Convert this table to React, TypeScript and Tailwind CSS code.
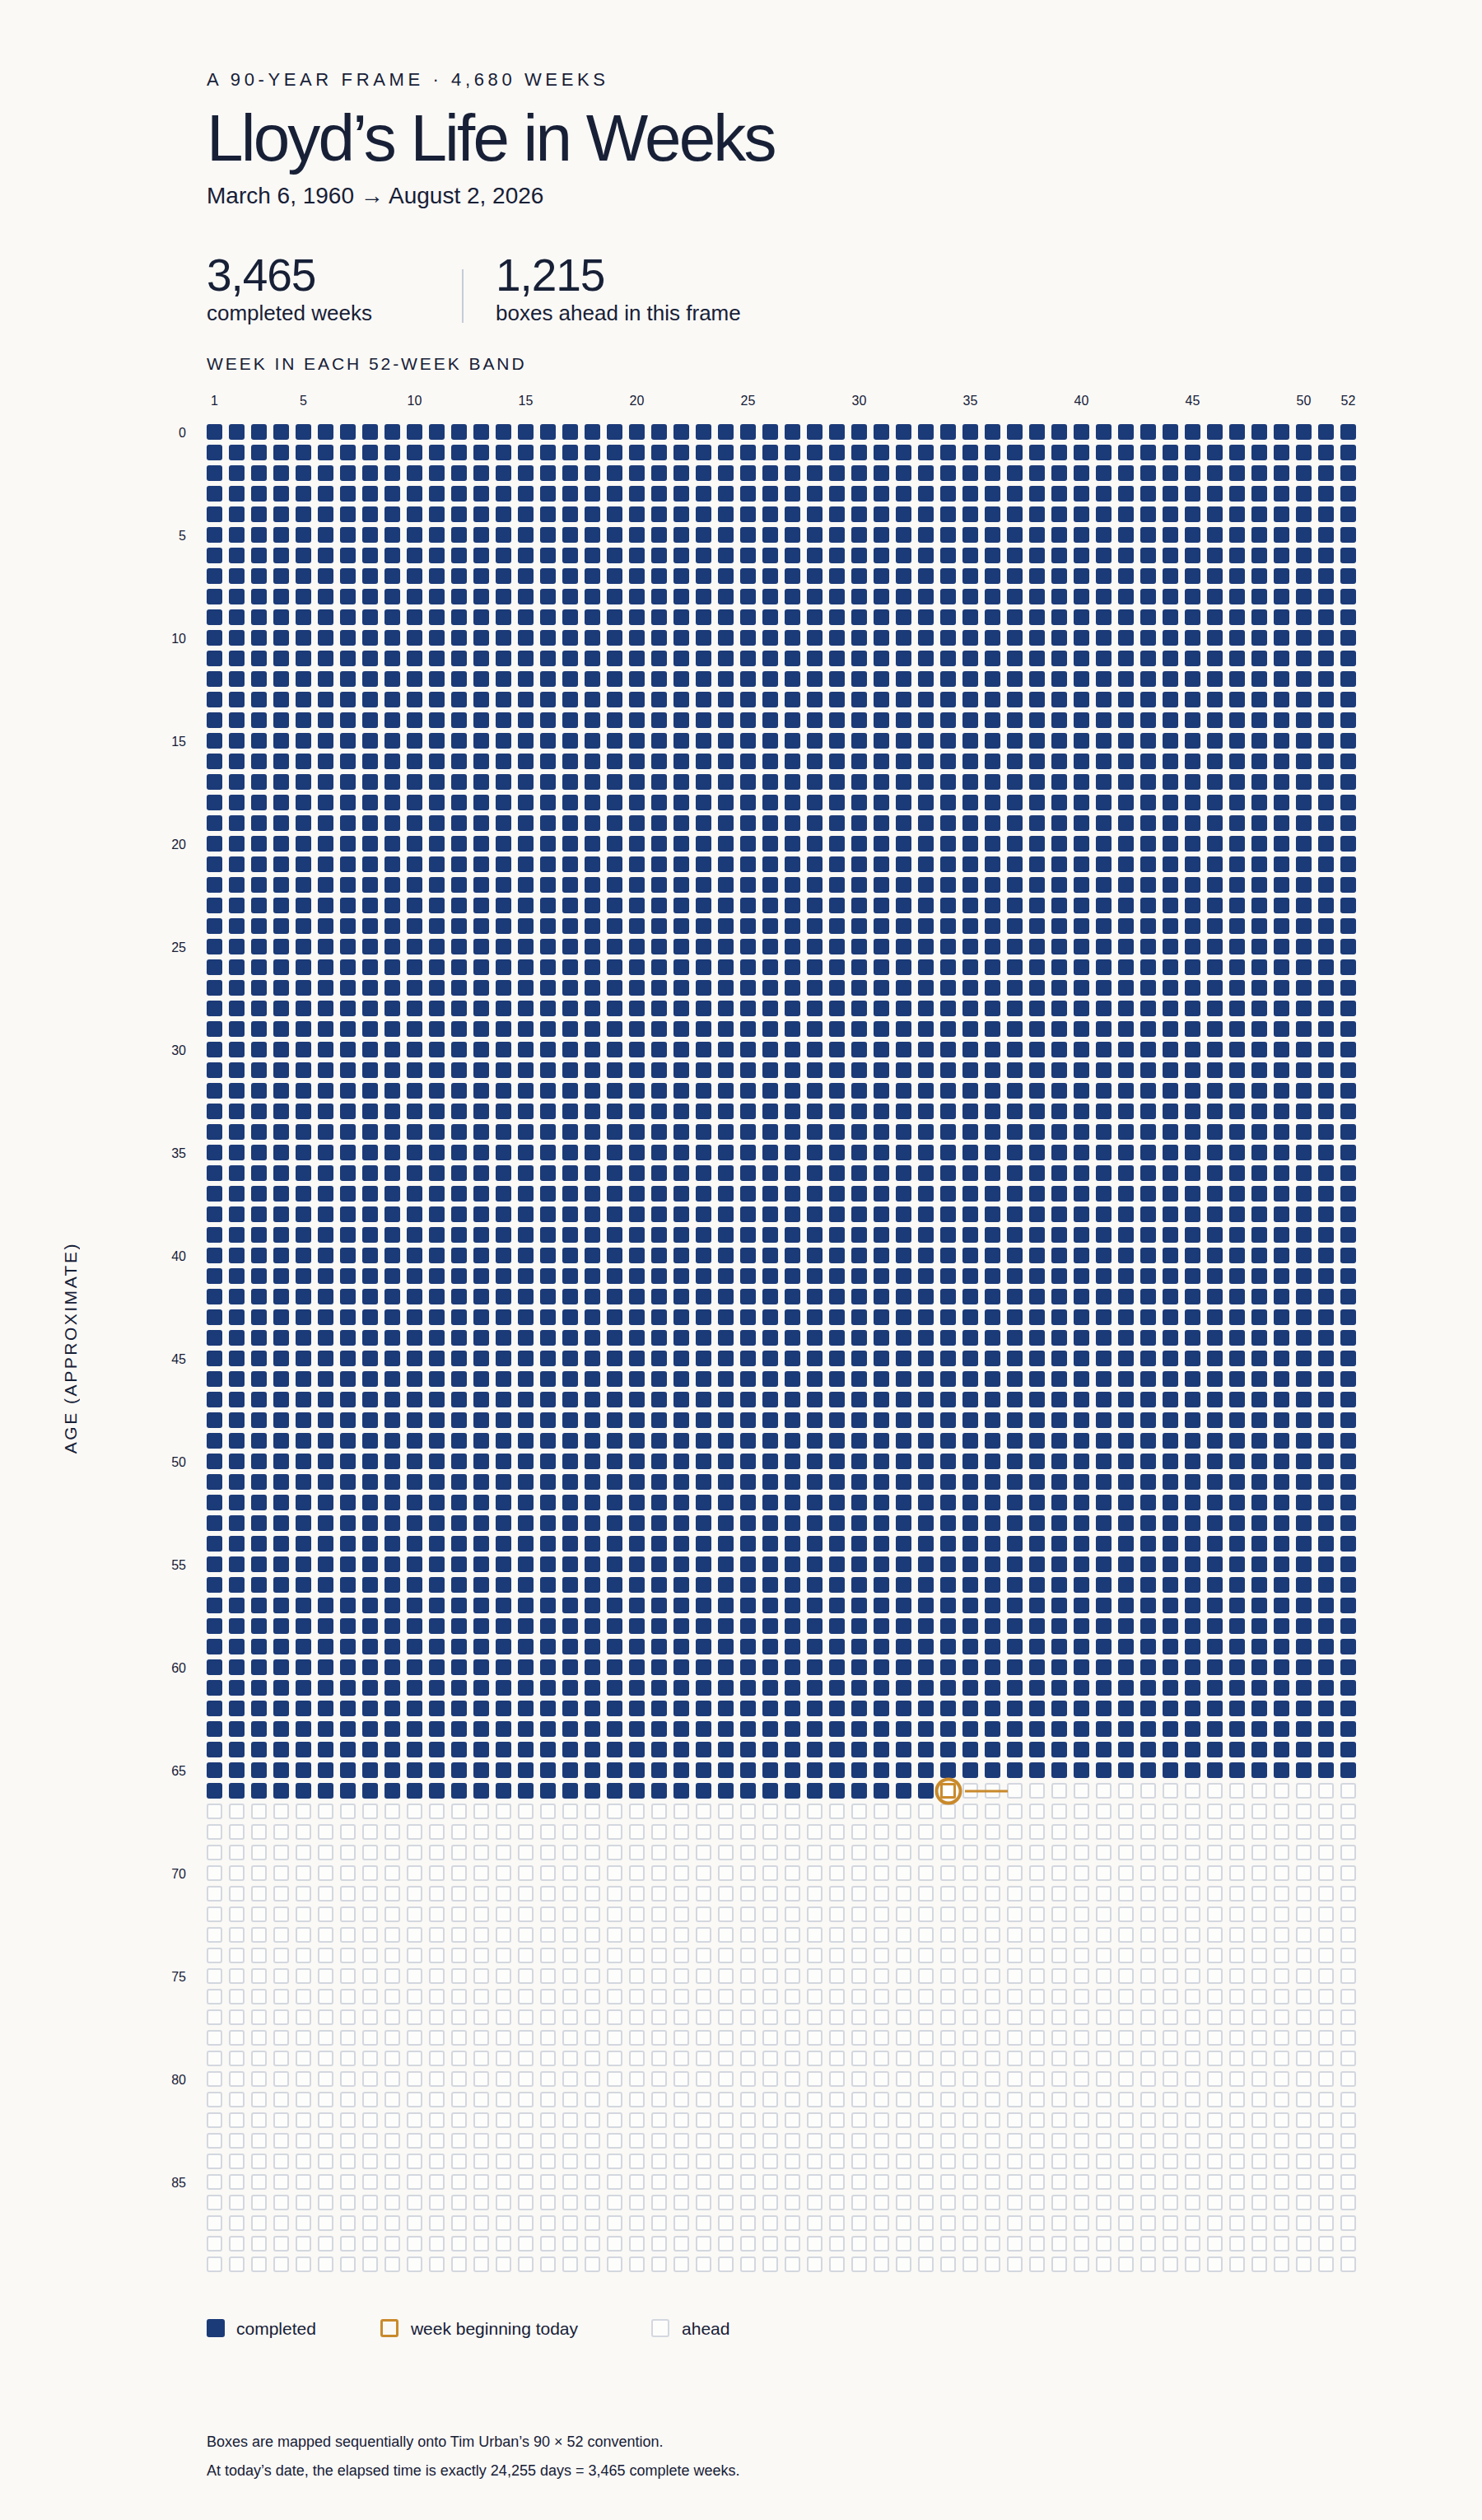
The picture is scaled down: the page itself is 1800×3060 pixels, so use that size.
import React from 'react';

const TOTAL_ROWS = 90;
const WEEKS_PER_ROW = 52;
const COMPLETED = 3465;

const weekLabels = [1, 5, 10, 15, 20, 25, 30, 35, 40, 45, 50, 52];

const Cell: React.FC<{ index: number }> = ({ index }) => {
  if (index < COMPLETED) {
    return <div className="h-[19px] w-[19px] rounded-[3px] bg-[#1b3a78]" />;
  }
  if (index === COMPLETED) {
    // the week that begins today, with its ring and pointer line
    return (
      <div className="relative h-[19px] w-[19px] rounded-[2px] border-[3px] border-[#c98a2c] bg-white">
        <div className="absolute left-1/2 top-1/2 h-[33px] w-[33px] -translate-x-1/2 -translate-y-1/2 rounded-full border-4 border-[#c98a2c]" />
        <div className="absolute left-[27px] top-1/2 h-[3px] w-[52px] -translate-y-1/2 bg-[#c98a2c]" />
      </div>
    );
  }
  return <div className="h-[19px] w-[19px] rounded-[3px] border-2 border-[#d3d7df] bg-[#fdfdfc]" />;
};

const App: React.FC = () => {
  const cells = Array.from({ length: TOTAL_ROWS * WEEKS_PER_ROW }, (_, i) => i);
  const rows = Array.from({ length: TOTAL_ROWS }, (_, i) => i);
  const cols = Array.from({ length: WEEKS_PER_ROW }, (_, i) => i + 1);

  return (
    <div className="min-h-[3060px] bg-[#faf9f6] pl-[76px] pt-[86px] font-['Liberation_Sans',Arial,sans-serif] text-[#172036]">
      {/* Header */}
      <div className="ml-[175px]">
        <p className="text-[22px] uppercase leading-[22px] tracking-[0.21em]">A 90-Year Frame · 4,680 Weeks</p>
        <h1 className="mt-[20px] text-[80px] font-normal leading-[80px] tracking-[-0.035em]">Lloyd’s Life in Weeks</h1>
        <p className="mt-[16px] text-[28px] leading-[28px]">March 6, 1960 → August 2, 2026</p>

        {/* Stats */}
        <div className="mt-[55px] flex items-start">
          <div className="w-[310px]">
            <div className="text-[55px] leading-[55px] tracking-[-0.02em]">3,465</div>
            <div className="mt-[5px] text-[26px] leading-[26px]">completed weeks</div>
          </div>
          <div className="mt-[20px] h-[65px] w-[2px] bg-[#c5ccd8]" />
          <div className="ml-[39px]">
            <div className="text-[55px] leading-[55px] tracking-[-0.02em]">1,215</div>
            <div className="mt-[5px] text-[26px] leading-[26px]">boxes ahead in this frame</div>
          </div>
        </div>

        <p className="mt-[38px] text-[21px] uppercase leading-[21px] tracking-[0.14em]">Week in each 52-week band</p>

        {/* Week numbers */}
        <div className="mt-[27px] grid grid-cols-[repeat(52,19px)] gap-x-[8px] text-[16px] leading-[16px]">
          {cols.map((c) => (
            <div key={c} className="flex justify-center whitespace-nowrap">
              {weekLabels.includes(c) ? c : ''}
            </div>
          ))}
        </div>
      </div>

      {/* Chart */}
      <div className="mt-[20px] flex">
        <div className="flex w-[18px] items-center justify-center">
          <span className="rotate-180 whitespace-nowrap text-[21px] uppercase leading-[21px] tracking-[0.12em] [writing-mode:vertical-rl]">
            Age (approximate)
          </span>
        </div>
        <div className="mr-[25px] flex w-[132px] flex-col gap-y-[6px] text-[16px]">
          {rows.map((r) => (
            <div key={r} className="h-[19px] pt-[1px] text-right leading-[19px]">
              {r % 5 === 0 ? r : ''}
            </div>
          ))}
        </div>
        <div className="grid grid-cols-[repeat(52,19px)] gap-x-[8px] gap-y-[6px]">
          {cells.map((i) => (
            <Cell key={i} index={i} />
          ))}
        </div>
      </div>

      {/* Legend */}
      <div className="ml-[175px] mt-[57px] flex items-center text-[21px] leading-[21px]">
        <div className="flex items-center">
          <span className="h-[22px] w-[22px] rounded-[3px] bg-[#1b3a78]" />
          <span className="ml-[14px]">completed</span>
        </div>
        <div className="ml-[78px] flex items-center">
          <span className="h-[22px] w-[22px] rounded-[3px] border-[3px] border-[#c98a2c]" />
          <span className="ml-[15px]">week beginning today</span>
        </div>
        <div className="ml-[89px] flex items-center">
          <span className="h-[22px] w-[22px] rounded-[3px] border-2 border-[#d3d7df] bg-[#fdfdfc]" />
          <span className="ml-[15px]">ahead</span>
        </div>
      </div>

      {/* Notes */}
      <div className="ml-[175px] mt-[118px] text-[18px] leading-[18px]">
        <p>Boxes are mapped sequentially onto Tim Urban’s 90 × 52 convention.</p>
        <p className="mt-[17px]">At today’s date, the elapsed time is exactly 24,255 days = 3,465 complete weeks.</p>
      </div>
    </div>
  );
};

export default App;
